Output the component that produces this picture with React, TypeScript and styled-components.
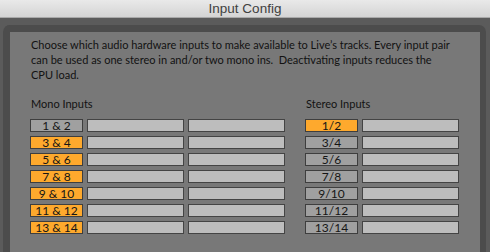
import styled, { createGlobalStyle } from "styled-components";

const GlobalStyle = createGlobalStyle`
  html, body {
    margin: 0;
    padding: 0;
    height: 100%;
    background: #5b5b5b;
    overflow: hidden;
  }
  #root {
    height: 100%;
  }
`;

const Window = styled.div`
  display: flex;
  flex-direction: column;
  height: 252px;
  width: 490px;
  background: #5b5b5b;
`;

const TitleBar = styled.div`
  height: 17px;
  display: flex;
  align-items: center;
  justify-content: center;
  background: linear-gradient(#e9e9e9, #d4d4d4);
  border-bottom: 1px solid #a9a9a9;
  font-family: "Liberation Sans", Arial, sans-serif;
  font-size: 13.5px;
  color: #404040;
`;

const Frame = styled.div`
  flex: 1;
  display: flex;
  margin: 7px 4px 0 3px;
  border: 7px solid #4c4c4c;
  border-right-width: 6px;
  border-bottom: none;
  border-radius: 7px 7px 0 0;
`;

const Panel = styled.div`
  flex: 1;
  background: #787878;
  padding: 5px 20px 0 20px;
  font-family: Lato, sans-serif;
  font-size: 11px;
  color: #121212;
`;

const Description = styled.p`
  margin: 0 0 0 1px;
  line-height: 15px;
  white-space: nowrap;
`;

const Sections = styled.div`
  display: flex;
  gap: 20px;
  margin-top: 14px;
`;

const Section = styled.div`
  display: flex;
  flex-direction: column;
  gap: 4px;
`;

const Heading = styled.div`
  line-height: 15px;
  margin: 0 0 4px 1px;
`;

const Row = styled.div`
  display: flex;
  gap: 4px;
`;

const Toggle = styled.div<{ $on: boolean }>`
  box-sizing: border-box;
  width: 53px;
  height: 13px;
  border: 1px solid #3e3e3e;
  background: ${(p) => (p.$on ? "#fea92d" : "#a0a0a0")};
  text-align: center;
  line-height: 11px;
  font-size: 12px;
  color: #151515;
`;

const Slot = styled.div`
  box-sizing: border-box;
  width: 97px;
  height: 13px;
  border: 1px solid #444444;
  background: #bdbdbd;
`;

const mono = [
  { label: "1 & 2", on: false },
  { label: "3 & 4", on: true },
  { label: "5 & 6", on: true },
  { label: "7 & 8", on: true },
  { label: "9 & 10", on: true },
  { label: "11 & 12", on: true },
  { label: "13 & 14", on: true },
];

const stereo = [
  { label: "1/2", on: true },
  { label: "3/4", on: false },
  { label: "5/6", on: false },
  { label: "7/8", on: false },
  { label: "9/10", on: false },
  { label: "11/12", on: false },
  { label: "13/14", on: false },
];

export default function App() {
  return (
    <Window>
      <GlobalStyle />
      <TitleBar>Input Config</TitleBar>
      <Frame>
        <Panel>
          <Description>
            Choose which audio hardware inputs to make available to Live’s tracks. Every input pair
            <br />
            can be used as one stereo in and/or two mono ins.&nbsp; Deactivating inputs reduces the
            <br />
            CPU load.
          </Description>
          <Sections>
            <Section>
              <Heading>Mono Inputs</Heading>
              {mono.map((m) => (
                <Row key={m.label}>
                  <Toggle $on={m.on}>{m.label}</Toggle>
                  <Slot />
                  <Slot />
                </Row>
              ))}
            </Section>
            <Section>
              <Heading>Stereo Inputs</Heading>
              {stereo.map((s) => (
                <Row key={s.label}>
                  <Toggle $on={s.on}>{s.label}</Toggle>
                  <Slot />
                </Row>
              ))}
            </Section>
          </Sections>
        </Panel>
      </Frame>
    </Window>
  );
}
